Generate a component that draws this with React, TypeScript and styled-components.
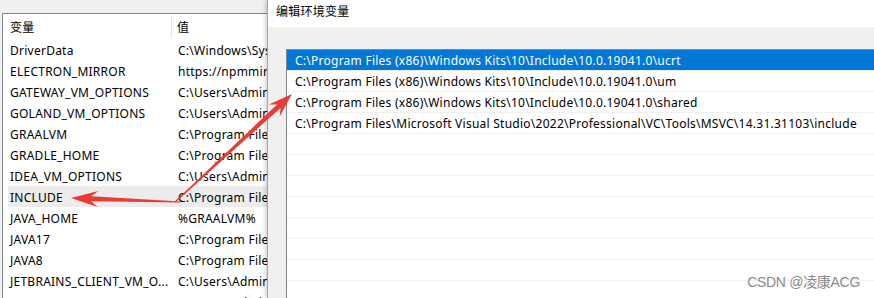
import React from 'react';
import styled, { createGlobalStyle } from 'styled-components';

const GlobalStyle = createGlobalStyle`
  html, body {
    margin: 0;
    padding: 0;
    background: #f0f0f0;
  }
  body {
    width: 874px;
    height: 298px;
    overflow: hidden;
    font-family: 'Noto Sans', 'Noto Sans CJK SC', sans-serif;
    font-size: 12px;
    letter-spacing: 0.25px;
    color: #000;
  }
`;

const Screen = styled.div`
  position: relative;
  display: flex;
  width: 874px;
  height: 298px;
  overflow: hidden;
`;

// left: the env var list behind the dialog
const EnvPanel = styled.section`
  flex: 0 0 267px;
  display: flex;
  flex-direction: column;
  background: #f0f0f0;
  overflow: hidden;
`;

const TopStrip = styled.div`
  flex: none;
  height: 13px;
`;

const ListBox = styled.div`
  flex: 1;
  margin-left: 2px;
  background: #fff;
  border-left: 1px solid #828790;
  border-top: 1px solid #828790;
`;

const HeaderRow = styled.div`
  display: grid;
  grid-template-columns: 169px 1fr;
  height: 25px;
  padding-top: 1px;
  box-sizing: border-box;
  white-space: nowrap;
`;

const HeaderCell = styled.div<{ $divider?: boolean }>`
  height: 20px;
  padding-top: 3px;
  line-height: 20px;
  padding-left: ${p => (p.$divider ? '7px' : '5px')};
  border-right: ${p => (p.$divider ? '1px solid #e5e5e5' : 'none')};
`;

const VarRow = styled.div<{ $hover?: boolean }>`
  display: grid;
  grid-template-columns: 164px 1fr;
  height: 19px;
  padding-top: 2px;
  line-height: 19px;
  margin-left: 5px;
  white-space: nowrap;
  background: ${p => (p.$hover ? '#ececec' : 'transparent')};
`;

const VarName = styled.span`
  padding-left: 2px;
  overflow: hidden;
`;

const VarValue = styled.span`
  padding-left: 6px;
`;

// right: the edit dialog
const Dialog = styled.section`
  position: relative;
  z-index: 1;
  flex: 1;
  display: flex;
  flex-direction: column;
  background: #f0f0f0;
  border-left: 1px solid #a3a3a3;
  box-shadow: -2px 0 4px rgba(0, 0, 0, 0.16);
`;

const TitleBar = styled.div`
  flex: none;
  height: 27px;
  line-height: 24px;
  padding-left: 8px;
  background: #fff;
`;

const DialogBody = styled.div`
  flex: 1;
  display: flex;
  padding: 22px 0 0 18px;
`;

const PathList = styled.div`
  flex: 1;
  background: #fff;
  border-left: 1px solid #828790;
  border-top: 1px solid #828790;
`;

const PathRow = styled.div<{ $selected?: boolean }>`
  height: 18px;
  padding: 2px 0 0 8px;
  line-height: 18px;
  white-space: nowrap;
  border-bottom: 1px solid #f0f0f0;
  background: ${p => (p.$selected ? '#0078d7' : '#fff')};
  color: ${p => (p.$selected ? '#fff' : '#000')};
`;

const Overlay = styled.svg`
  position: absolute;
  inset: 0;
  z-index: 2;
  pointer-events: none;
`;

const Watermark = styled.div`
  position: absolute;
  right: 14px;
  bottom: 8px;
  z-index: 3;
  font-family: 'Liberation Sans', 'Noto Sans CJK SC', sans-serif;
  font-size: 14px;
  line-height: 16px;
  letter-spacing: -0.3px;
  color: #8a8a8a;
  text-shadow: 0 0 2px #fff;
`;

const vars = [
  ['DriverData', 'C:\\Windows\\System32\\Drivers\\DriverData'],
  ['ELECTRON_MIRROR', 'https://npmmirror.com/mirrors/electron/'],
  ['GATEWAY_VM_OPTIONS', 'C:\\Users\\Administrator\\'],
  ['GOLAND_VM_OPTIONS', 'C:\\Users\\Administrator\\'],
  ['GRAALVM', 'C:\\Program Files\\'],
  ['GRADLE_HOME', 'C:\\Program Files\\'],
  ['IDEA_VM_OPTIONS', 'C:\\Users\\Administrator\\'],
  ['INCLUDE', 'C:\\Program Files\\'],
  ['JAVA_HOME', '%GRAALVM%'],
  ['JAVA17', 'C:\\Program Files\\'],
  ['JAVA8', 'C:\\Program Files\\'],
  ['JETBRAINS_CLIENT_VM_O...', 'C:\\Users\\Administrator\\'],
  ['JETBRAINSCLIENT_VM_O...', 'C:\\Users\\Administrator\\'],
];

const paths = [
  'C:\\Program Files (x86)\\Windows Kits\\10\\Include\\10.0.19041.0\\ucrt',
  'C:\\Program Files (x86)\\Windows Kits\\10\\Include\\10.0.19041.0\\um',
  'C:\\Program Files (x86)\\Windows Kits\\10\\Include\\10.0.19041.0\\shared',
  'C:\\Program Files\\Microsoft Visual Studio\\2022\\Professional\\VC\\Tools\\MSVC\\14.31.31103\\include',
];

type Pt = [number, number];

// tapered annotation arrow, thin at the tail and wide at the head
const arrowPoints = (tail: Pt, tip: Pt, headLen: number, headHalf: number) => {
  const dx = tip[0] - tail[0];
  const dy = tip[1] - tail[1];
  const len = Math.hypot(dx, dy);
  const ux = dx / len;
  const uy = dy / len;
  const nx = -uy;
  const ny = ux;
  const at = (d: number, w: number): string =>
    `${(tip[0] - ux * d + nx * w).toFixed(1)},${(tip[1] - uy * d + ny * w).toFixed(1)}`;
  return [
    at(len, 0.6),
    at(headLen * 0.75, 2.5),
    at(headLen, headHalf),
    at(0, 0),
    at(headLen, -headHalf),
    at(headLen * 0.75, -2.5),
    at(len, -0.6),
  ].join(' ');
};

const Arrows = () => (
  <Overlay width="874" height="298" viewBox="0 0 874 298">
    <polygon points={arrowPoints([181, 202], [71, 198], 27, 8)} fill="#eb3b32" />
    <polygon points={arrowPoints([175, 202], [292, 94], 24, 8)} fill="#eb3b32" />
  </Overlay>
);

const App = () => (
  <>
    <GlobalStyle />
    <Screen>
      <EnvPanel>
        <TopStrip />
        <ListBox>
          <HeaderRow>
            <HeaderCell $divider>变量</HeaderCell>
            <HeaderCell>值</HeaderCell>
          </HeaderRow>
          {vars.map(([name, value]) => (
            <VarRow key={name} $hover={name === 'INCLUDE'}>
              <VarName>{name}</VarName>
              <VarValue>{value}</VarValue>
            </VarRow>
          ))}
        </ListBox>
      </EnvPanel>
      <Dialog>
        <TitleBar>编辑环境变量</TitleBar>
        <DialogBody>
          <PathList>
            {paths.map((p, i) => (
              <PathRow key={p} $selected={i === 0}>{p}</PathRow>
            ))}
            {Array.from({ length: 8 }, (_, i) => (
              <PathRow key={`empty-${i}`} />
            ))}
          </PathList>
        </DialogBody>
      </Dialog>
      <Arrows />
      <Watermark>CSDN @凌康ACG</Watermark>
    </Screen>
  </>
);

export default App;
